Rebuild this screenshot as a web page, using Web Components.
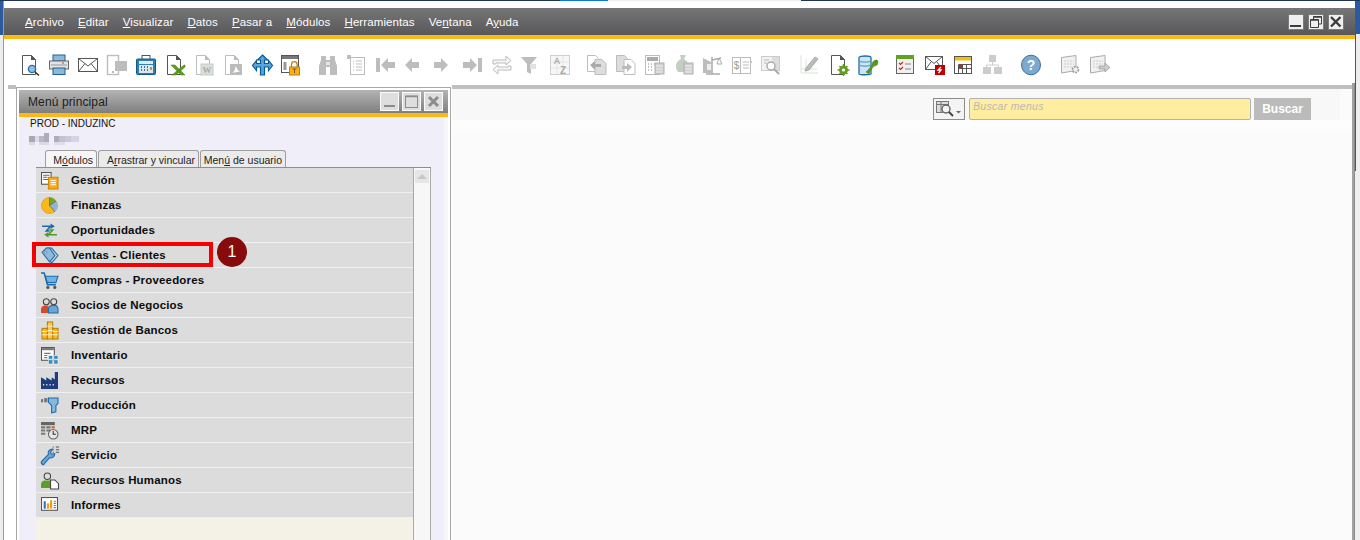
<!DOCTYPE html>
<html lang="es">
<head>
<meta charset="utf-8">
<title>Menú principal</title>
<style>
html,body{margin:0;padding:0;background:#fff;overflow:hidden}
body{width:1360px;height:540px;font-family:"Liberation Sans",Arial,sans-serif}
</style>
</head>
<body>
<sb-app>
  <sb-menubar slot="menubar">
    <sb-menuitem><u>A</u>rchivo</sb-menuitem>
    <sb-menuitem><u>E</u>ditar</sb-menuitem>
    <sb-menuitem><u>V</u>isualizar</sb-menuitem>
    <sb-menuitem><u>D</u>atos</sb-menuitem>
    <sb-menuitem><u>P</u>asar a</sb-menuitem>
    <sb-menuitem><u>M</u>ódulos</sb-menuitem>
    <sb-menuitem><u>H</u>erramientas</sb-menuitem>
    <sb-menuitem>Ve<u>n</u>tana</sb-menuitem>
    <sb-menuitem>A<u>y</u>uda</sb-menuitem>
  </sb-menubar>
  <sb-toolbar slot="toolbar"></sb-toolbar>
  <sb-menuwindow slot="left">
    <span slot="title">Menú principal</span>
    <span slot="company">PROD - INDUZINC</span>
    <sb-tab slot="tabs" active>M<u>ó</u>dulos</sb-tab>
    <sb-tab slot="tabs" style="width:101px">A<u>r</u>rastrar y vincular</sb-tab>
    <sb-tab slot="tabs" style="width:86px">Men<u>ú</u> de usuario</sb-tab>
    <sb-modulerow icon="gestion">Gestión</sb-modulerow>
    <sb-modulerow icon="finanzas">Finanzas</sb-modulerow>
    <sb-modulerow icon="oportunidades">Oportunidades</sb-modulerow>
    <sb-modulerow icon="ventas" callout="1">Ventas - Clientes</sb-modulerow>
    <sb-modulerow icon="compras">Compras - Proveedores</sb-modulerow>
    <sb-modulerow icon="socios">Socios de Negocios</sb-modulerow>
    <sb-modulerow icon="bancos">Gestión de Bancos</sb-modulerow>
    <sb-modulerow icon="inventario">Inventario</sb-modulerow>
    <sb-modulerow icon="recursos">Recursos</sb-modulerow>
    <sb-modulerow icon="produccion">Producción</sb-modulerow>
    <sb-modulerow icon="mrp">MRP</sb-modulerow>
    <sb-modulerow icon="servicio">Servicio</sb-modulerow>
    <sb-modulerow icon="rrhh">Recursos Humanos</sb-modulerow>
    <sb-modulerow icon="informes">Informes</sb-modulerow>
  </sb-menuwindow>
  <sb-searchbar slot="right"></sb-searchbar>
</sb-app>

<script>
const G='#bdbdbd', G2='#cfcfcf', D='#555';
const page=(c=D,f='#fff')=>`<path d="M2.500 .5h9l4 4v15h-13z" fill="${f}" stroke="${c}"/><path d="M11 0l5 5h-5z" fill="${c}"/>`;
const TOOL={
 docsearch:`${page()}<circle cx="12" cy="14" r="3.600" fill="#8fbfe0" stroke="#2c6e9e" stroke-width="1.400"/><path d="M15 17l4 3.500" stroke="#333" stroke-width="1.600"/>`,
 printer:`<rect x="4" y="0" width="12" height="6" fill="#8fb8d8" stroke="#1d6295"/><rect x=".5" y="6" width="19" height="8" fill="#e4e4e4" stroke="#666"/><path d="M2 10h16" stroke="#999"/><path d="M13 8h2" stroke="#d33"/><rect x="4" y="13" width="12" height="6.500" fill="#8fb8d8" stroke="#1d6295"/>`,
 mail:`<rect x=".5" y="3.500" width="19" height="13" fill="#fff" stroke="${D}"/><path d="M.5 3.500L10 11l9.500-7.500M.5 16.500L7 8.500M19.500 16.500L13 8.500" fill="none" stroke="${D}"/>`,
 sms:`<rect x=".5" y=".5" width="11" height="19" fill="#fff" stroke="${G}" stroke-width="1.400"/><rect x="5" y="16" width="2" height="2" fill="${G}"/><path d="M8 6h12v10h-8l-4 0z" fill="${G}"/>`,
 fax:`<rect x="6" y=".5" width="8" height="4" fill="#fff" stroke="#555"/><rect x=".5" y="4" width="19" height="15.500" rx="1" fill="#2d7fb2" stroke="#155a86"/><rect x="3" y="6" width="14" height="3" fill="#dcecf6"/><rect x="3" y="10" width="14" height="8" fill="#dbe7ee"/><path d="M5 12h1M8 12h1M11 12h1M5 15h1M8 15h1M11 15h1" stroke="#246" stroke-width="1.500"/><path d="M15 12v3" stroke="#e0822a" stroke-width="2"/>`,
 excel:`${page()}<path d="M6 10l10 10h4L10 10zM19 10L7 20h4l9-8v-2z" fill="#62a01c" stroke="#3c7a10" stroke-width=".5"/>`,
 word:`${page(G)}<rect x="7" y="9" width="12" height="11" fill="#ddd" stroke="#bfd0bf"/><text x="13" y="18" font-family="Liberation Serif" font-weight="700" font-size="9" text-anchor="middle" fill="#aaa">W</text>`,
 pdf:`${page(G)}<rect x="7" y="9" width="12" height="11" fill="#bbb"/><path d="M9 18c3-1 3-5 4-7 1 3 2 5 4 6-3 0-5 0-8 1z" fill="#fff"/>`,
 arrows:`<path d="M10.500 0l5 5h-3v3.500h4v-3l4 5-4 5v-3.500h-4V20H8.500V12H4.500v3.500l-4-5 4-5v3h4V5H5.500z" fill="#5aa5dc" stroke="#0a5a96" stroke-width="1.200"/>`,
 winlock:`<rect x=".5" y=".5" width="17" height="17" fill="#fff" stroke="#555"/><rect x="1" y="1" width="16" height="3" fill="#777"/><rect x="2.500" y="7" width="3" height="8" fill="#999"/><path d="M10.500 12v-2.500a2.800 2.800 0 0 1 5.600 0V12" fill="none" stroke="#c47d10" stroke-width="1.300"/><rect x="8.500" y="12" width="10" height="8" fill="#fbb116" stroke="#c47d10"/><path d="M11.500 14h4M13.500 14v4" stroke="#754"/>`,
 binoc:`<path d="M3 1h5v4h4V1h5v4l2 6v9h-7v-8H8v8H1v-9l2-6z" fill="${G}"/><path d="M8 7h4v3H8z" fill="#e5e5e5"/>`,
 list:`<rect x="0" y="0" width="4" height="4" fill="${G}"/><rect x="3.500" y="2.500" width="14" height="17" fill="#fff" stroke="${G}"/><path d="M6 6h1M9 6h6M6 9h1M9 9h6M6 12h1M9 12h6M6 15h1M9 15h6" stroke="${G}"/>`,
 first:`<rect x="0" y="3" width="4" height="14" fill="${G}"/><path d="M5 10l7-7v4h7v6h-7v4z" fill="${G}"/>`,
 prev:`<path d="M0 10l7-7v4h7v6H7v4z" fill="${G}"/>`,
 next:`<path d="M14 10L7 3v4H0v6h7v4z" fill="${G}"/>`,
 last:`<rect x="15" y="3" width="4" height="14" fill="${G}"/><path d="M14 10L7 3v4H0v6h7v4z" fill="${G}"/>`,
 refresh:`<path d="M1 9V5h13V1l5 4.500L14 10V8H4v1zM19 11v4H6v4l-5-4.500L6 10v2h10v-1z" fill="#f6f6f6" stroke="${G}"/>`,
 filter:`<path d="M0 2h16L10 9v10l-4-2V9z" fill="${G}"/><rect x="9" y="9" width="6" height="5" fill="#e2e2e2"/>`,
 az:`<rect x=".5" y=".5" width="19" height="19" fill="#f7f7f7" stroke="${G2}"/><path d="M7 1v18M13 1v18M1 7h18M1 13h18" stroke="#e5e5e5"/><text x="7" y="9" font-family="Liberation Sans" font-weight="700" font-size="9" text-anchor="middle" fill="#aaa">A</text><text x="13" y="19" font-family="Liberation Sans" font-weight="700" font-size="10" text-anchor="middle" fill="#aaa">Z</text>`,
 docleft:`<path d="M.5 .5h8l3 3v13H.5z" fill="#fff" stroke="${G}"/><path d="M8 4.500h7l4 4v11H8z" fill="#ddd" stroke="${G}"/><path d="M3 10l5-4v3h6v3H8v3z" fill="#aaa"/>`,
 docright:`<path d="M.5 .5h8l3 3v13H.5z" fill="#ddd" stroke="${G}"/><path d="M8 4.500h7l4 4v11H8z" fill="#fff" stroke="${G}"/><path d="M16 12l-5-4v3H6v3h5v3z" fill="#bbb"/>`,
 calc:`<rect x=".5" y=".5" width="14" height="19" fill="#fff" stroke="${G}"/><rect x="2" y="2" width="11" height="4" fill="#aaa"/><path d="M3 9h1M6 9h1M9 9h1M3 12h1M6 12h1M3 15h1M6 15h1" stroke="#aaa" stroke-width="1.400"/><rect x="10" y="8" width="9" height="11" fill="#cfcfcf" stroke="#b0b0b0"/><path d="M11 11h7M11 14h7M11 17h7" stroke="#eee"/>`,
 bag:`<path d="M6 0h6L10 4c5 3 6 8 3 13H4C0 12 2 6 7 4z" fill="#c4cfc4"/><rect x="10" y="8" width="9" height="11" fill="#cfcfcf" stroke="#b0b0b0"/><path d="M11 11h7M11 14h7M11 17h7" stroke="#eee"/>`,
 scales:`<path d="M0 3l8 4v11H0z" fill="${G}"/><path d="M9 19V2M3 19h14M9 5l9-2" stroke="#aaa" stroke-width="1.500" fill="none"/><rect x="4" y="9" width="4" height="6" fill="#eee"/><path d="M16 3l-2 6h5z" fill="#fff" stroke="#aaa"/>`,
 dollar:`<rect x=".5" y="2.500" width="18" height="16" fill="#fff" stroke="${G}"/><path d="M8.500 3v15" stroke="${G}"/><text x="4.500" y="14" font-family="Liberation Sans" font-size="10" text-anchor="middle" fill="#999">$</text><path d="M11 7h6M11 10h6M11 13h6" stroke="${G}"/><path d="M19 7h1" stroke="#bcd4bc" stroke-width="2"/>`,
 searchdoc:`<rect x=".5" y="1.500" width="18" height="14" fill="#f2f2f2" stroke="#ccc"/><rect x="11" y="2" width="7" height="13" fill="#ddd"/><path d="M3 5h5M3 8h3" stroke="#bbb"/><circle cx="10" cy="11" r="4" fill="#fff" stroke="#aaa" stroke-width="1.400"/><path d="M13 14l5 5" stroke="#aaa" stroke-width="2"/>`,
 pencil:`<path d="M1 0v18h17M1 14h16M6 4v14" stroke="#d9e4d9" fill="none"/><path d="M6 13L15 2l3 2-9 11-4 1z" fill="#bbb" stroke="#aaa"/>`,
 docgear:`${page()}<circle cx="14.500" cy="15" r="4.500" fill="#62a01c"/><path d="M14.500 9v12M8.500 15h12M10.500 11l8 8M18.500 11l-8 8" stroke="#62a01c" stroke-width="1.500"/><circle cx="14.500" cy="15" r="1.600" fill="#fff"/>`,
 dbwrench:`<path d="M1 2.500C1 .5 13 .5 13 2.500V19c0 1-12 1-12 0z" fill="#cfe4f3" stroke="#1d6ea8" stroke-width="1.300"/><path d="M1 6c3 1.500 9 1.500 12 0M1 10c3 1.500 9 1.500 12 0" fill="none" stroke="#5a9fcb" stroke-width="1.300"/><path d="M19 5l1 2c0 3-2 4-4 4l-4 5-1 3-3-2 3-3 3-4c0-3 2-5 5-5l-2 3z" fill="#5c9c1c" stroke="#3c7a10" stroke-width=".5"/>`,
 todo:`<rect x=".5" y="1.500" width="17" height="17" fill="#f0f0f0" stroke="#666"/><rect x="0" y="0" width="18" height="4" fill="#64a022"/><path d="M3 8l1.500 1.500L7 7M3 13l1.500 1.500L7 12" stroke="#c22" fill="none" stroke-width="1.200"/><path d="M9 9h6M9 14h6" stroke="#888"/>`,
 mailred:`<rect x=".5" y="1.500" width="17" height="13" fill="#fff" stroke="${D}"/><path d="M.5 1.500L9 8.500l8.500-7M.5 14.500L6 7M17.500 14.500L12 7" fill="none" stroke="${D}"/><rect x="10" y="10" width="10" height="10" fill="#c00000"/><path d="M16 12l-3 3h3l-2.500 3" fill="none" stroke="#fff" stroke-width="1.300"/>`,
 calendar:`<rect x=".5" y="1.500" width="17" height="17" fill="#fff" stroke="#555"/><rect x="1" y="2" width="16" height="3.500" fill="#f9b917"/><path d="M4.500 9.500h13M4.500 13.500h13M4.500 9.500v9M8.500 9.500v9M12.500 9.500v9" stroke="#555" fill="none"/><rect x="5" y="10" width="3" height="3" fill="#c22"/>`,
 hier:`<rect x="6" y="0" width="7" height="7" fill="#ccc"/><path d="M9.500 7v3M3.500 12v-2h12v2" stroke="#ccc" fill="none"/><rect x="0" y="12" width="8" height="7" fill="#ccc"/><rect x="11" y="12" width="8" height="7" fill="#ccc"/>`,
 help:`<ellipse cx="10" cy="10" rx="9.500" ry="9.800" fill="#7ba9cf" stroke="#3f6f9a"/><text x="10" y="15" font-family="Liberation Sans" font-weight="700" font-size="14" text-anchor="middle" fill="#fff">?</text>`,
 gridgear:`<path d="M.5 2.500L15 .5v15L.5 18z" fill="#f1f1f1" stroke="#aaa"/><path d="M3 6h10M3 9h10M3 12h10" stroke="#ccc" stroke-dasharray="2 1"/><circle cx="14.500" cy="14.500" r="3" fill="#eee" stroke="#999" stroke-width="1.600" stroke-dasharray="2 1"/>`,
 gridarrow:`<path d="M.5 2.500L15 .5v15L.5 18z" fill="#f1f1f1" stroke="#aaa"/><path d="M3 6h10M3 9h10M3 12h10" stroke="#ccc" stroke-dasharray="2 1"/><path d="M9 11h6V8l5 4.500-5 4.500v-3H9z" fill="#ccc" stroke="#999" stroke-width=".7"/>`
};
const MOD={
 gestion:`<rect x=".5" y=".5" width="9" height="11" fill="#fff" stroke="#555"/><path d="M2 3h6M2 5h4M2 7h6" stroke="#666"/><rect x="7" y="5" width="9" height="11" fill="#f9a91a" stroke="#d68600"/><path d="M9 8h5M9 10h5M9 12h5" stroke="#fff"/>`,
 finanzas:`<circle cx="8" cy="8" r="7.500" fill="#fbb816" stroke="#d89100" stroke-width=".6"/><path d="M8 8V.5A7.500 7.500 0 0 1 14 4z" fill="#6da532"/><path d="M8 8l6-4a7.500 7.500 0 0 1-1 10z" fill="#8db5d6"/><path d="M8 8V.5M8 8l6-4M8 8l5 6" stroke="#555" stroke-width=".6"/>`,
 oportunidades:`<path d="M1 4h8l-4 4.500h3" fill="none" stroke="#1b69ad" stroke-width="1.500"/><path d="M9 1.500L13 4 9 6.500z" fill="#1b69ad"/><path d="M15 12H7l4-4.500H8" fill="none" stroke="#4c9a2a" stroke-width="1.500"/><path d="M7 9.500L3 12l4 2.500z" fill="#4c9a2a"/>`,
 ventas:`<path d="M6 1h4l6 7-6 7-3-3z" fill="#b7d2e8" stroke="#2b6da3"/><path d="M1 5l4-4h3l5 7-5 6z" fill="#8fb8da" stroke="#2b6da3"/><circle cx="4.500" cy="5" r="1" fill="#fff" stroke="#2b6da3" stroke-width=".6"/>`,
 compras:`<path d="M0 1h3l3 11h8" fill="none" stroke="#1b69ad" stroke-width="1.400"/><path d="M4 4h12l-2 6H6z" fill="#6fb3de" stroke="#1b69ad"/><circle cx="6.500" cy="14.500" r="1.500" fill="#555"/><circle cx="13" cy="14.500" r="1.500" fill="#555"/>`,
 socios:`<circle cx="5" cy="4.500" r="2.800" fill="#ddd" stroke="#444"/><circle cx="12" cy="4.500" r="2.800" fill="#ddd" stroke="#444"/><path d="M0 15v-3c0-3 2-4 4-4h3v7z" fill="#d34b28"/><path d="M7 15v-3c0-3 2-4 4-4h2c2 0 3 1 3 4v3z" fill="#6ea6d3" stroke="#1b69ad"/>`,
 bancos:`<rect x="1" y="6" width="5" height="10" fill="#fbb816" stroke="#b97f0b"/><rect x="6" y="0" width="5" height="16" fill="#fbc94a" stroke="#b97f0b"/><rect x="11" y="6" width="5" height="10" fill="#fbb816" stroke="#b97f0b"/><path d="M1 9h5M1 12h5M6 4h5M6 8h5M6 12h5M11 9h5M11 12h5" stroke="#fff2c4"/>`,
 inventario:`<rect x=".5" y=".5" width="12" height="12" fill="#fff" stroke="#555"/><rect x="1" y="1" width="11" height="2" fill="#777"/><path d="M3 6h6M3 8h3M3 10h3" stroke="#777"/><path d="M7 8h4v3.500H7zM12 8h4v3.500h-4zM7 12h4v4H7zM12 12h4v4h-4z" fill="#3a8abc" stroke="#fff" stroke-width=".5"/>`,
 recursos:`<path d="M0 16V5l5 3V5l5 3V5l3 2V0h3v16z" fill="#1f3c80"/><path d="M2 12h1M5 12h1M8 12h1M11 12h1" stroke="#fff" stroke-width="1.500"/>`,
 produccion:`<rect x="0" y="2" width="2" height="3" fill="#777"/><rect x="3" y="1" width="3" height="4" fill="#777"/><path d="M7 1h9v5l-2 2v6l-4 1V8L7 5z" fill="#8ab7d8" stroke="#1b69ad"/>`,
 mrp:`<rect x="0" y="0" width="13" height="3" fill="#666"/><path d="M0 4h4v2H0zM5 4h4v2H5zM0 7h4v2H0zM5 7h4v2H5zM0 10h4v2H0z" fill="#777"/><rect x="10" y="4" width="3" height="2" fill="#d2602a"/><circle cx="11.500" cy="11.500" r="4.500" fill="#e6e6e6" stroke="#666"/><path d="M11.500 8.500v3h2.500" fill="none" stroke="#333"/>`,
 servicio:`<path d="M1 16c-1-1-1-2 0-3l6-6c-1-3 1-5 4-5l-2 3 1 2 3-1c0 3-3 5-5 4l-5 6c-1 1-1 1-2 0z" fill="#6ea6d3" stroke="#1b69ad"/><path d="M11 0h1M14 0h3M11 2.500h1M14 2.500h3M11 5h1M14 5h3" stroke="#555"/>`,
 rrhh:`<circle cx="6" cy="4" r="3" fill="#ddd" stroke="#444"/><path d="M0 15v-3c0-3 2-4 4-4h4c1 0 2 1 3 2v5z" fill="#5e9e26"/><path d="M9 7.500h4l3.500 3.500v5H9z" fill="#fff" stroke="#444"/>`,
 informes:`<rect x=".5" y=".5" width="15" height="12" fill="#fff" stroke="#555"/><rect x="2.500" y="4" width="2" height="7" fill="#2c78b4"/><rect x="5.500" y="6" width="2" height="5" fill="#f59a1c"/><rect x="8.500" y="3" width="2" height="8" fill="#f59a1c"/><path d="M12 4h2M12 6h2M12 8h2M12 10h2" stroke="#777"/>`
};
function def(name,html,mixin){
  class C extends HTMLElement{
    constructor(){super();this.attachShadow({mode:'open'}).innerHTML=html;}
    connectedCallback(){ if(mixin) mixin.call(this); }
  }
  customElements.define(name,C);
}
def('sb-app',`<style>
:host{display:flex;flex-direction:column;width:1360px;height:540px;overflow:hidden;background:#fff;color:#111}
.top{display:flex;height:1px;flex:none;background:#1f3556}
.top i{display:block;height:1px}
.frame{display:flex;flex:1;min-height:0}
.l{flex:none;width:3px;background:#ececec;border-right:1px solid #9a9a9a;display:flex;flex-direction:column}
.l b{display:block;height:34px;background:#2b5a9e}
.rw{flex:none;width:5px;background:#eee}
.rw .r{width:4px;height:170px;background:#eee;border-left:1px solid #555}
.rw b{display:block;height:33px;background:#2b5a9e}
.main{flex:1;min-width:0;display:flex;flex-direction:column}
.white{height:7px;flex:none}
.bar{height:27px;flex:none;background:linear-gradient(#767676,#58575b)}
.yel{height:4px;flex:none;background:#fdb913}
.tb{height:46px;flex:none}
.work{flex:1;min-height:0;display:flex}
.gut{flex:none;width:12px;display:flex;flex-direction:column}
.gut span{display:block;margin-left:4px;height:4px;background:#bfbfbf}
.rp{flex:1;min-width:0;display:flex;flex-direction:column;margin-left:1px}
.band{height:4px;flex:none;background:#bfbfbf}
.rb{flex:none;width:3px;background:#a2a2a2;margin-top:-2px;border-right:1px solid #8a8a8a;box-sizing:border-box}
</style>
<div class="top"><i style="width:560px"></i><i style="width:48px;background:#0a78d0"></i><i style="width:193px;background:#eeeeee"></i></div>
<div class="frame">
  <div class="l"><b></b></div>
  <div class="main">
    <div class="white"></div>
    <div class="bar"><slot name="menubar"></slot></div>
    <div class="yel"></div>
    <div class="tb"><slot name="toolbar"></slot></div>
    <div class="work">
      <div class="gut"><span></span></div>
      <slot name="left"></slot>
      <div class="rp"><div class="band"></div><slot name="right"></slot></div>
      <div class="rb"></div>
    </div>
  </div>
  <div class="rw"><div class="r"><b></b></div></div>
</div>`);
def('sb-menubar',`<style>:host{display:flex;height:27px;align-items:center;justify-content:space-between;padding:0 11px 0 21px;box-sizing:border-box}
.m{display:flex;gap:14px;align-items:center;height:27px}
.w{display:flex;gap:4px}
.w i{display:flex;width:14px;height:14px;background:#efefef;border:1px solid #7b7b7b;align-items:center;justify-content:center}
</style><div class="m"><slot></slot></div><div class="w">
<i><svg width="14" height="14"><rect x="1" y="10" width="11" height="2" fill="#3c3c3c"/></svg></i>
<i><svg width="14" height="14" fill="none" stroke="#3c3c3c"><path d="M4.500 4V1.500h8V9H10M1.500 4.500h8v8h-8z"/><path d="M1.500 5h8M4.500 2h8" stroke-width="1.500"/></svg></i>
<i><svg width="14" height="14"><path d="M2 2l9.500 9.500M11.500 2L2 11.500" stroke="#3c3c3c" stroke-width="2.400"/></svg></i>
</div>`);
def('sb-menuitem',`<style>:host{display:block;font:11.5px/14px "Liberation Sans",Arial,sans-serif;letter-spacing:.1px;color:#fff;white-space:nowrap}</style><slot></slot>`);
def('sb-tool',`<style>:host{display:block;flex:none;width:20px;height:20px}svg{display:block;overflow:visible}</style><svg width="20" height="20" viewBox="0 0 20 20"></svg>`,function(){
  this.shadowRoot.querySelector('svg').innerHTML=TOOL[this.getAttribute('name')]||'';
});
def('sb-toolbar',`<style>:host{display:flex;gap:9px;padding:16px 0 0 16px;box-sizing:border-box;height:46px}</style><slot></slot>`,function(){
  if(this.childElementCount) return;
  const groups=[['docsearch','printer','mail','sms','fax','excel','word','pdf','arrows','winlock'],
   ['binoc','list','first','prev','next','last','refresh','filter','az'],
   ['docleft','docright','calc','bag','scales','dollar','searchdoc'],
   ['pencil','docgear','dbwrench'],['todo','mailred','calendar','hier'],['help'],['gridgear','gridarrow']];
  const gaps=[0,8,8,10,9,9,11];
  groups.forEach((g,i)=>g.forEach((n,j)=>{
    const t=document.createElement('sb-tool');t.setAttribute('name',n);
    if(j===0&&gaps[i]) t.style.marginLeft=gaps[i]+'px';
    this.appendChild(t);
  }));
});
def('sb-menuwindow',`<style>
:host{display:block;flex:none;width:435px;box-sizing:border-box;margin-top:2px;border:solid #a8a8a8;border-width:1px 1px 0;background:#fff;padding:2px 2px 0;overflow:hidden}
.tt{display:flex;align-items:center;justify-content:space-between;height:23px;width:429px;padding:0 5px 0 9px;box-sizing:border-box;background:linear-gradient(#b4b4b4,#7f7f7f);font:12px "Liberation Sans",Arial,sans-serif;letter-spacing:.12px;color:#1c1c1c}
.tt div{display:flex;gap:3px}
.tt i{display:flex;width:19px;height:19px;box-sizing:border-box;border:1px solid #fbfbfb;background:#dedede;align-items:center;justify-content:center}
.y{height:4px;width:429px;background:#fdb913}
.c{background:linear-gradient(90deg,#f0eef8 0 425px,#f7f6fb 425px);padding:0 0 0 17px;height:424px;width:429px;box-sizing:border-box;display:flex;flex-direction:column}
.co{font:10px/12px "Liberation Sans",Arial,sans-serif;color:#111;margin:1px 0 0 -6px;height:12px}
.bl{margin:3px 0 0 -7px;height:12px;display:block;flex:none}
.tabs{display:flex;margin:5px 0 0 9px;height:17px;gap:1px;flex:none}
.list{display:flex;width:395px;flex:1;min-height:0;border-top:1px solid #8e8e8e}
.rows{flex:none;width:377px;background:#f4f2e6;display:flex;flex-direction:column;position:relative}
.sc{flex:none;width:18px;box-sizing:border-box;background:#f7f7f7;border:solid #a9a9a9;border-width:0 1px;padding:2px 1px 0}
.th{height:13px;background:#e6e6e6;display:flex;align-items:center;justify-content:center}
.th:after{content:"";border:solid transparent;border-width:0 5px 5px;border-bottom-color:#c9c9c9}
</style>
<div class="tt"><slot name="title"></slot><div>
<i><svg width="17" height="17"><rect x="3" y="12" width="11" height="2" fill="#8c8c8c"/></svg></i>
<i><svg width="17" height="17" fill="none" stroke="#8c8c8c"><rect x="2.500" y="3" width="12" height="11.500"/><path d="M3 3.500h11" stroke-width="1.500"/></svg></i>
<i><svg width="17" height="17"><path d="M4 4l9 9M13 4l-9 9" stroke="#8c8c8c" stroke-width="3"/></svg></i>
</div></div><div class="y"></div>
<div class="c">
  <div class="co"><slot name="company"></slot></div>
  <svg class="bl" width="50" height="12" viewBox="0 0 50 12"><path d="M0 3h6v6H0z" fill="#a9a7b6"/><path d="M6 3h4v6H6z" fill="#dcdae6"/><path d="M10 3h5v6h-5z" fill="#b9b7c6"/><path d="M15 0h5v9h-5z" fill="#aeacbc"/><path d="M0 9h6v3H0zM10 9h10v3H10z" fill="#dad8e5"/><path d="M25 3h5v6h-5z" fill="#aeacbb"/><path d="M30 3h6v6h-6z" fill="#c3c1d0"/><path d="M36 3h6v6h-6z" fill="#cbc9d8"/><path d="M42 3h8v6h-8z" fill="#d6d4e2"/><path d="M25 9h11v3H25z" fill="#dedce8"/></svg>
  <div class="tabs"><slot name="tabs"></slot></div>
  <div class="list"><div class="rows"><slot></slot></div><div class="sc"><div class="th"></div></div></div>
</div>`);
def('sb-tab',`<style>
:host{display:flex;flex:none;width:52px;height:17px;box-sizing:border-box;align-items:center;justify-content:flex-end;padding:1px 3px 0 0;border:1px solid #9f9f9f;border-bottom:0;border-radius:3px 3px 0 0;background:#ebebeb;font:10.5px "Liberation Sans",Arial,sans-serif;color:#222;white-space:pre}
:host([active]){background:#f6f6f6}
</style><slot></slot>`);
def('sb-modulerow',`<style>
:host{display:flex;flex:none;position:relative;height:25px;box-sizing:border-box;align-items:center;background:#dcdcdc;border-bottom:1px solid #f0f0f0;font:bold 11.5px "Liberation Sans",Arial,sans-serif;letter-spacing:.17px;color:#0c0c0c;white-space:nowrap;padding:0 0 0 5px}
svg{flex:none;width:17px;height:17px;margin-right:13px;display:block;overflow:visible}
.box{position:absolute;left:-4px;top:-1px;width:181px;height:25px;box-sizing:border-box;border:4px solid #f40000}
.num{position:absolute;left:181px;top:-6px;width:30px;height:30px;border-radius:50%;background:#870b0b;color:#fff;font:16px/30px "Liberation Sans",Arial,sans-serif;text-align:center;letter-spacing:0}
</style><svg viewBox="0 0 16 16"></svg><slot></slot><span id="o"></span>`,function(){
  this.shadowRoot.querySelector('svg').innerHTML=MOD[this.getAttribute('icon')]||'';
  const n=this.getAttribute('callout');
  if(n) this.shadowRoot.getElementById('o').innerHTML=`<div class="box"></div><div class="num">${n}</div>`;
});
def('sb-searchbar',`<style>
:host{display:flex;flex:none;flex-direction:column;height:100%;background:#fbfbfb}
.strip{height:31px;width:888px;flex:none;background:#f8f8f8;display:flex;box-sizing:border-box;padding:9px 0 0 481px}
.w{height:9px;background:#fdfdfd;flex:none}
.btn{flex:none;width:32px;height:22px;box-sizing:border-box;border:1px solid #8c8c8c;background:#f4f4f4;display:flex;align-items:center;justify-content:center}
.inp{flex:none;width:282px;height:22px;margin-left:4px;box-sizing:border-box;border:1px solid #b2b2b2;border-radius:2px;background:#ffee9f;font:italic 10.5px/15px "Liberation Sans",Arial,sans-serif;letter-spacing:.3px;color:#b8b8b8;padding:0 0 0 3px}
.go{flex:none;width:57px;height:22px;margin-left:3px;background:#bbb;color:#fff;font:bold 12px/22px "Liberation Sans",Arial,sans-serif;text-align:center}
</style>
<div class="strip">
 <div class="btn"><svg width="26" height="18" viewBox="0 0 26 18"><rect x=".5" y="1.500" width="12" height="11" fill="#ddd" stroke="#777"/><path d="M1 4.500h11M5 2v10" stroke="#777"/><circle cx="10" cy="9" r="4" fill="#f4f4f4" stroke="#666" stroke-width="1.400"/><path d="M13 12l4 4" stroke="#444" stroke-width="2"/><path d="M20 11h5l-2.500 2.500z" fill="#666"/></svg></div>
 <div class="inp">Buscar menus</div>
 <div class="go">Buscar</div>
</div><div class="w"></div>`);
</script>
</body>
</html>
